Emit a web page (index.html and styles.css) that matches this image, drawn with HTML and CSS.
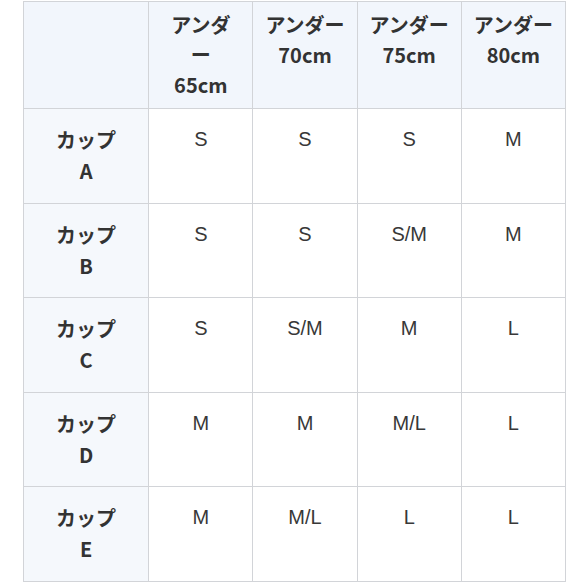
FILE: index.html
```html
<!DOCTYPE html>
<html lang="ja">
<head>
<meta charset="utf-8">
<link rel="stylesheet" href="styles.css">
</head>
<body>
<table class="size-table">
  <colgroup>
    <col class="c-label">
    <col class="c-data"><col class="c-data"><col class="c-data"><col class="c-data">
  </colgroup>
  <thead>
    <tr>
      <th class="corner"></th>
      <th>アンダ<br>ー<br>65cm</th>
      <th>アンダー<br>70cm</th>
      <th>アンダー<br>75cm</th>
      <th>アンダー<br>80cm</th>
    </tr>
  </thead>
  <tbody>
    <tr><th class="row-label">カップ<br>A</th><td>S</td><td>S</td><td>S</td><td>M</td></tr>
    <tr><th class="row-label">カップ<br>B</th><td>S</td><td>S</td><td>S/M</td><td>M</td></tr>
    <tr><th class="row-label">カップ<br>C</th><td>S</td><td>S/M</td><td>M</td><td>L</td></tr>
    <tr><th class="row-label">カップ<br>D</th><td>M</td><td>M</td><td>M/L</td><td>L</td></tr>
    <tr><th class="row-label">カップ<br>E</th><td>M</td><td>M/L</td><td>L</td><td>L</td></tr>
  </tbody>
</table>
</body>
</html>
```

FILE: styles.css
```css
html, body {
  margin: 0;
  padding: 0;
  background: #ffffff;
}

body {
  padding: 1px 0 0 23px;
}

.size-table {
  border-collapse: collapse;
  table-layout: fixed;
  width: 543px;
  font-family: "Noto Sans CJK JP", "Noto Sans", sans-serif;
  color: #333333;
}

.c-label { width: 125px; }
.c-data { width: 104px; }

.size-table th,
.size-table td {
  border: 1px solid #d2d4d8;
  text-align: center;
  vertical-align: top;
}

.size-table thead th {
  background: #f2f6fc;
  font-size: 20px;
  font-weight: 700;
  line-height: 30px;
  padding: 8px 4px 8px;
  height: 90px;
  box-sizing: content-box;
}

.size-table .row-label {
  background: #f5f8fc;
  font-size: 20px;
  font-weight: 700;
  line-height: 31px;
  padding: 15px 4px 16.6px;
}

.size-table td {
  font-family: "Liberation Sans", Arial, sans-serif;
  font-size: 20px;
  line-height: 30px;
  color: #383838;
  padding: 15px 4px;
}
```
